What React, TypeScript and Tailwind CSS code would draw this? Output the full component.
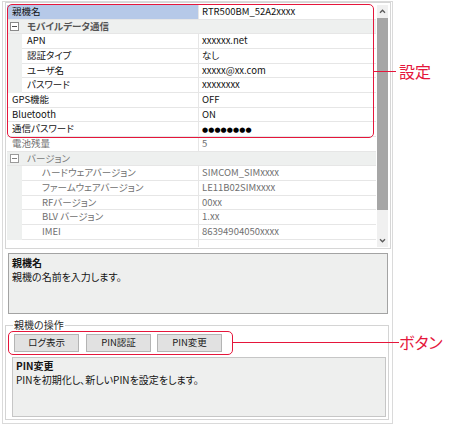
import React from "react";

type RowProps = {
  name?: string;
  value?: React.ReactNode;
  level?: 0 | 1 | 2;
  category?: boolean;
  bold?: boolean;
  gray?: boolean;
  selected?: boolean;
  gutter?: boolean;
};

const Minus = ({ gray }: { gray?: boolean }) => (
  <svg width="9" height="9" viewBox="0 0 9 9" className="shrink-0">
    <rect x="0.5" y="0.5" width="8" height="8" fill="#ffffff" stroke={gray ? "#9a9a9a" : "#8a8a8a"} />
    <line x1="2" y1="4.5" x2="7" y2="4.5" stroke={gray ? "#808080" : "#505050"} />
  </svg>
);

function Row({ name, value, level = 0, category, bold, gray, selected, gutter }: RowProps) {
  const txt = gray ? "text-[#707070]" : "text-[#111111]";
  if (category) {
    return (
      <div className="flex h-[14.67px] shrink-0 items-center bg-[#eef0ef] border-b border-[#e6e6e6]">
        <div className="w-[20px] pl-[3px] flex items-center">
          <Minus gray={gray} />
        </div>
        <span className={`${bold ? "font-bold text-[#555555]" : "text-[#7a7a7a]"} leading-none`}>{name}</span>
      </div>
    );
  }
  return (
    <div className="flex h-[14.67px] shrink-0">
      {gutter && <div className="w-[15px] shrink-0 bg-[#eef0ef]" />}
      <div
        className={`${gutter ? "w-[177px]" : "w-[192px]"} shrink-0 flex items-center border-b border-r border-[#e6e6e6] ${
          selected ? "bg-[#b6c9e8]" : "bg-white"
        } ${level === 2 ? "pl-[20px]" : "pl-[5px]"}`}
      >
        <span className={`${txt} leading-none whitespace-nowrap`}>{name}</span>
      </div>
      <div className="flex-1 flex items-center border-b border-[#e6e6e6] pl-[3px] bg-white">
        <span className={`${txt} leading-none whitespace-nowrap`}>{value}</span>
      </div>
    </div>
  );
}

const Chevron = ({ down }: { down?: boolean }) => (
  <svg width="7" height="5" viewBox="0 0 7 5">
    <path
      d={down ? "M1 1.2 L3.5 3.8 L6 1.2" : "M1 3.8 L3.5 1.2 L6 3.8"}
      fill="none"
      stroke="#5a5a5a"
      strokeWidth="1.3"
    />
  </svg>
);

const Btn = ({ children, className = "" }: { children: React.ReactNode; className?: string }) => (
  <div
    className={`w-[65px] h-[18px] shrink-0 flex items-center justify-center bg-[#e1e1e1] border border-[#b4b4b4] text-[#1a1a1a] leading-none ${className}`}
  >
    {children}
  </div>
);

export default function App() {
  const red = "#e5163b";
  return (
    <div
      className="relative w-[450px] h-[431px] bg-white text-[9.5px] overflow-hidden [font-feature-settings:'palt']"
      style={{ fontFamily: "'Noto Sans CJK JP', 'Noto Sans', sans-serif" }}
    >
      {/* main panel */}
      <div className="ml-[2px] mt-[1px] w-[391px] h-[423px] border border-[#dadada] flex flex-col">
        {/* property grid */}
        <div className="ml-[2px] w-[386px] h-[247px] shrink-0 border border-[#d6d6d6] pt-[2px] pl-[1px] flex">
          <div className="w-[369px] h-[242px] overflow-hidden flex flex-col">
            <Row name="親機名" value="RTR500BM_52A2xxxx" selected />
            <Row name="モバイルデータ通信" category bold />
            <Row name="APN" value="xxxxxx.net" gutter level={1} />
            <Row name="認証タイプ" value="なし" gutter level={1} />
            <Row name="ユーザ名" value="xxxxx@xx.com" gutter level={1} />
            <Row name="パスワード" value="xxxxxxxx" gutter level={1} />
            <Row name="GPS機能" value="OFF" />
            <Row name="Bluetooth" value="ON" />
            <Row
              name="通信パスワード"
              value={
                <span className="text-[7px] tracking-[0.1px] text-black" style={{ fontFamily: "'DejaVu Sans', sans-serif" }}>
                  ●●●●●●●●
                </span>
              }
            />
            <Row name="電池残量" value="5" gray />
            <Row name="バージョン" category gray />
            <Row name="ハードウェアバージョン" value="SIMCOM_SIMxxxx" gutter level={2} gray />
            <Row name="ファームウェアバージョン" value="LE11B02SIMxxxx" gutter level={2} gray />
            <Row name="RFバージョン" value="00xx" gutter level={2} gray />
            <Row name="BLV バージョン" value="1.xx" gutter level={2} gray />
            <Row name="IMEI" value="86394904050xxxx" gutter level={2} gray />
            <Row name="" value="" />
          </div>
          {/* scrollbar */}
          <div className="ml-[1px] w-[11px] h-[242px] flex flex-col bg-[#f0f0f0]">
            <div className="h-[13px] flex items-center justify-center">
              <Chevron />
            </div>
            <div className="h-[192px] bg-[#a6a6a6]" />
            <div className="flex-1" />
            <div className="h-[13px] flex items-center justify-center">
              <Chevron down />
            </div>
          </div>
        </div>

        {/* description 1 */}
        <div className="mt-[4px] ml-[5px] w-[380px] h-[61px] shrink-0 border border-[#a3a3a3] bg-[#eeefee] px-[3px] pt-[2px] text-[#141414] text-[10px] leading-[14px]">
          <div className="font-bold">親機名</div>
          <div>親機の名前を入力します。</div>
        </div>

        {/* group box */}
        <div className="relative mt-[11px] ml-[2px] w-[384px] h-[95px] shrink-0 border border-[#d4d4d4] flex flex-col">
          <div className="absolute left-[7px] top-[-7px] bg-white px-[1px] leading-[12px] text-[10px] text-[#2a2a2a]">親機の操作</div>
          <div className="mt-[8px] ml-[8px] flex">
            <Btn>ログ表示</Btn>
            <Btn className="ml-[7px]">PIN認証</Btn>
            <Btn className="ml-[6px]">PIN変更</Btn>
          </div>
          <div className="mt-[5px] ml-[6px] w-[374px] h-[60px] border border-[#c6c6c6] bg-[#eeefee] px-[3px] pt-[1px] text-[#141414] text-[10px] leading-[14px]">
            <div className="font-bold">PIN変更</div>
            <div>PINを初期化し、新しいPINを設定をします。</div>
          </div>
        </div>
      </div>

      {/* annotations */}
      <div className="absolute left-[7px] top-[4px] w-[367px] h-[134px] rounded-[5px] border" style={{ borderColor: red }} />
      <div className="absolute left-[374px] top-[71px] w-[22px] h-[1px]" style={{ background: red }} />
      <div className="absolute left-[399px] top-[61px] text-[16px] leading-[20px]" style={{ color: red }}>
        設定
      </div>
      <div className="absolute left-[8px] top-[331px] w-[225px] h-[24px] rounded-[5px] border" style={{ borderColor: red }} />
      <div className="absolute left-[233px] top-[342px] w-[166px] h-[1px]" style={{ background: red }} />
      <div className="absolute left-[399px] top-[332px] text-[16px] leading-[20px]" style={{ color: red }}>
        ボタン
      </div>
    </div>
  );
}
